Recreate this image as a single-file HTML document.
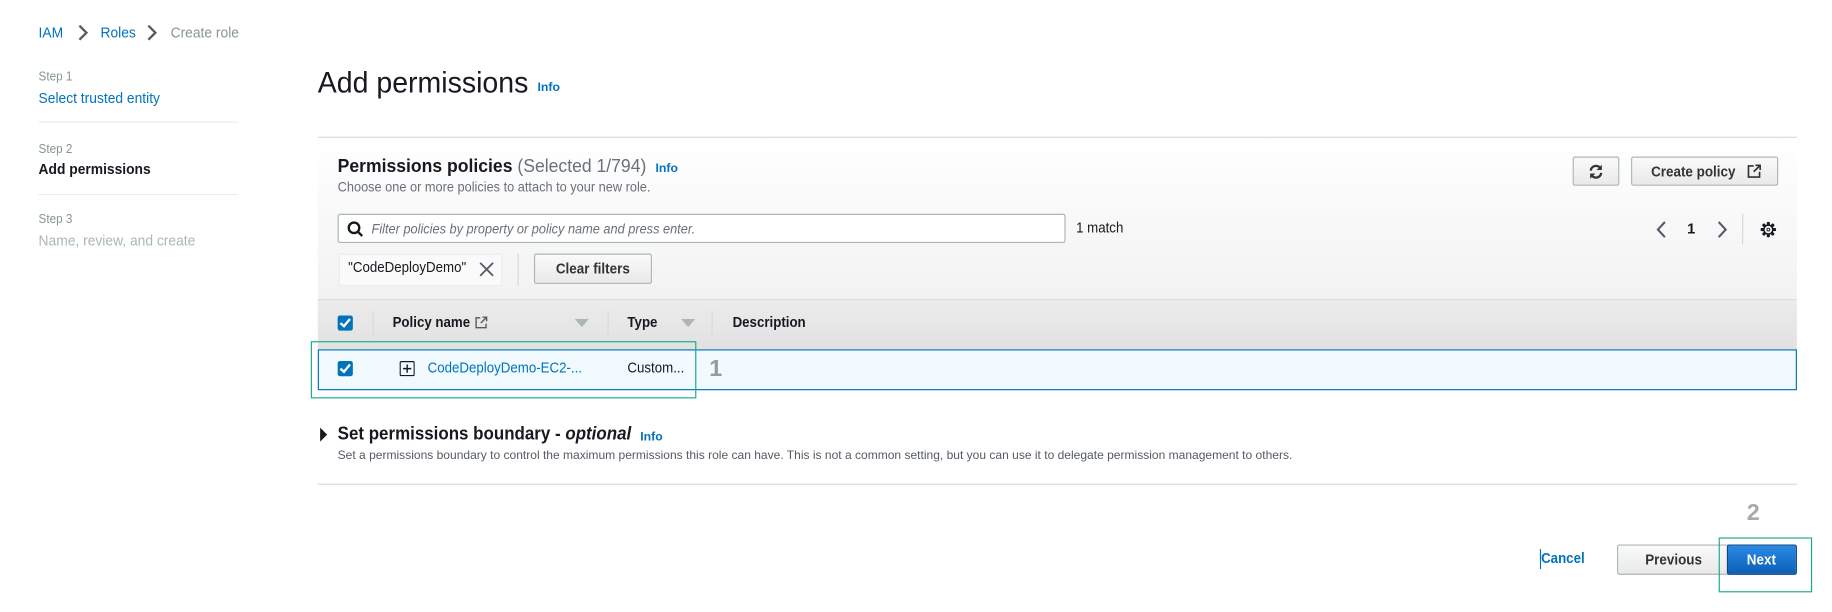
<!DOCTYPE html>
<html><head><meta charset="utf-8"><style>
html,body{margin:0;padding:0;background:#fff;overflow:hidden}
body{width:1832px;height:612px}
#s{position:absolute;left:0;top:0;width:1568px;height:524px;transform:scale(1.16837);transform-origin:0 0;font-family:"Liberation Sans",sans-serif;color:#16191f}
.a{position:absolute;white-space:nowrap}
.t{transform:scaleX(.91);transform-origin:0 0}
.blue{color:#0073bb}
.btn{position:absolute;border:1px solid #aab7b8;border-radius:2px;background:linear-gradient(#fafafa,#e9e9e9);font-weight:bold;font-size:12.5px;color:#333;display:flex;align-items:center;justify-content:center;box-sizing:border-box}
.btn span{display:inline-block;transform:scaleX(.92)}
.cb{position:absolute;width:13px;height:13px;background:#0073bb;border-radius:2px}
.cb:after{content:"";position:absolute;left:4px;top:1px;width:3px;height:7px;border:solid #fff;border-width:0 2px 2px 0;transform:rotate(40deg)}
.tri{position:absolute;width:0;height:0;border-left:6px solid transparent;border-right:6px solid transparent;border-top:7px solid #aab7b8}
</style></head><body><div id="s">
<div class="a t blue" style="left:33px;top:20px;font-size:13px">IAM</div>
<svg class="a" style="left:66px;top:21px" width="10" height="14"><path d="M2 1l6 6-6 6" fill="none" stroke="#545b64" stroke-width="2"/></svg>
<div class="a t blue" style="left:86px;top:20px;font-size:13px">Roles</div>
<svg class="a" style="left:125px;top:21px" width="10" height="14"><path d="M2 1l6 6-6 6" fill="none" stroke="#545b64" stroke-width="2"/></svg>
<div class="a t" style="left:146px;top:20px;font-size:13px;color:#879596">Create role</div>

<div class="a t" style="left:33px;top:60px;font-size:11px;color:#879596">Step 1</div>
<div class="a t blue" style="left:33px;top:76px;font-size:13px">Select trusted entity</div>
<div class="a" style="left:33px;top:104px;width:171px;height:1px;background:#eaeded"></div>
<div class="a t" style="left:33px;top:122px;font-size:11px;color:#879596">Step 2</div>
<div class="a t" style="left:33px;top:137px;font-size:13px;font-weight:bold">Add permissions</div>
<div class="a" style="left:33px;top:166px;width:171px;height:1px;background:#eaeded"></div>
<div class="a t" style="left:33px;top:182px;font-size:11px;color:#879596">Step 3</div>
<div class="a t" style="left:33px;top:198px;font-size:13px;color:#aab7b8">Name, review, and create</div>

<div class="a t" style="left:272px;top:57px;font-size:25px;color:#16191f;transform:scaleX(.975)">Add permissions</div>
<div class="a blue" style="left:460px;top:69px;font-size:10.5px;font-weight:bold">Info</div>

<div class="a" style="left:272px;top:117px;width:1266px;height:139px;border-top:1px solid #d5dbdb;background:linear-gradient(#fff,#f2f2f2)"></div>
<div class="a t" style="left:289px;top:134px;font-size:16px;transform:scaleX(.94)"><b>Permissions policies</b> <span style="color:#687078">(Selected 1/794)</span></div>
<div class="a blue" style="left:561px;top:138px;font-size:10.5px;font-weight:bold">Info</div>
<div class="a t" style="left:289px;top:153px;font-size:12px;color:#687078">Choose one or more policies to attach to your new role.</div>
<div class="btn" style="left:1346px;top:134px;width:40px;height:25px"><svg width="14" height="14" viewBox="0 0 14 14"><path d="M2.5 6A4.5 4.5 0 0 1 11 4.5M11.5 8A4.5 4.5 0 0 1 3 9.5" fill="none" stroke="#333" stroke-width="2"/><path d="M12 1v4.5H7.5zM2 13V8.5h4.5z" fill="#333"/></svg></div>
<div class="btn" style="left:1396px;top:134px;width:126px;height:25px"><span>Create policy</span>&nbsp;&nbsp;<svg width="13" height="13" viewBox="0 0 13 13"><path d="M6 2H1.5v9.5H11V7M7.5 1.5h4v4M11.5 1.5L6 7" fill="none" stroke="#333" stroke-width="1.4"/></svg></div>

<div class="a" style="left:289px;top:183px;width:623px;height:25px;border:1px solid #aab7b8;border-radius:2px;background:#fff;box-sizing:border-box"></div>
<svg class="a" style="left:297px;top:189px" width="14" height="14"><circle cx="6" cy="6" r="4.5" fill="none" stroke="#16191f" stroke-width="2"/><path d="M9 9l4 4" stroke="#16191f" stroke-width="2"/></svg>
<div class="a t" style="left:318px;top:189px;font-size:12px;font-style:italic;color:#687078">Filter policies by property or policy name and press enter.</div>
<div class="a t" style="left:921px;top:188px;font-size:12.5px;color:#16191f">1 match</div>
<svg class="a" style="left:1417px;top:189px" width="10" height="15"><path d="M8 1L2 7.5 8 14" fill="none" stroke="#545b64" stroke-width="1.8"/></svg>
<div class="a" style="left:1444px;top:189px;font-size:12.5px;font-weight:bold">1</div>
<svg class="a" style="left:1469px;top:189px" width="10" height="15"><path d="M2 1l6 6.5L2 14" fill="none" stroke="#545b64" stroke-width="1.8"/></svg>
<div class="a" style="left:1491px;top:183px;width:1px;height:26px;background:#d5dbdb"></div>
<svg class="a" style="left:1506px;top:189px" width="15" height="15" viewBox="0 0 17 17"><g fill="#16191f"><rect x="7" y="1" width="3" height="15" rx="1"/><rect x="1" y="7" width="15" height="3" rx="1"/><rect x="7" y="1" width="3" height="15" rx="1" transform="rotate(45 8.5 8.5)"/><rect x="7" y="1" width="3" height="15" rx="1" transform="rotate(-45 8.5 8.5)"/></g><circle cx="8.5" cy="8.5" r="5" fill="#16191f"/><circle cx="8.5" cy="8.5" r="3.6" fill="#f4f4f4"/><circle cx="8.5" cy="8.5" r="1.8" fill="#16191f"/><circle cx="8.5" cy="8.5" r="0.9" fill="#f4f4f4"/></svg>

<div class="a" style="left:290px;top:217px;width:140px;height:28px;border:1px solid #eaeded;border-radius:2px;background:#fafafa;box-sizing:border-box"></div>
<div class="a t" style="left:298px;top:222px;font-size:12.5px">"CodeDeployDemo"</div>
<svg class="a" style="left:410px;top:224px" width="13" height="13"><path d="M1 1l11 11M12 1L1 12" stroke="#545b64" stroke-width="1.6"/></svg>
<div class="a" style="left:443px;top:217px;width:1px;height:28px;background:#d5dbdb"></div>
<div class="btn" style="left:457px;top:217px;width:101px;height:26px"><span>Clear filters</span></div>

<div class="a" style="left:272px;top:256px;width:1266px;height:43px;border-top:1px solid #d5dbdb;background:linear-gradient(#ececec,#e1e1e1);box-sizing:border-box"></div>
<div class="cb" style="left:289px;top:270px"></div>
<div class="a" style="left:319px;top:266px;width:1px;height:22px;background:#d5dbdb"></div>
<div class="a t" style="left:336px;top:269px;font-size:12.5px;font-weight:bold">Policy name</div>
<svg class="a" style="left:406px;top:270px" width="12" height="12"><path d="M5 2H1.5v8.5H10V7M7 1.5h3.5V5M10.5 1.5L5.5 6.5" fill="none" stroke="#545b64" stroke-width="1.2"/></svg>
<div class="tri" style="left:492px;top:273px"></div>
<div class="a" style="left:520px;top:266px;width:1px;height:22px;background:#d5dbdb"></div>
<div class="a t" style="left:537px;top:269px;font-size:12.5px;font-weight:bold">Type</div>
<div class="tri" style="left:583px;top:273px"></div>
<div class="a" style="left:609px;top:266px;width:1px;height:22px;background:#d5dbdb"></div>
<div class="a t" style="left:627px;top:269px;font-size:12.5px;font-weight:bold">Description</div>

<div class="a" style="left:272px;top:299px;width:1266px;height:35px;border:1px solid #0073bb;background:#f1faff;box-sizing:border-box"></div>
<div class="cb" style="left:289px;top:309px"></div>
<svg class="a" style="left:342px;top:309px" width="13" height="13"><rect x="0.5" y="0.5" width="12" height="12" rx="1" fill="none" stroke="#16191f"/><path d="M6.5 3v7M3 6.5h7" stroke="#16191f" stroke-width="1.2"/></svg>
<div class="a t blue" style="left:366px;top:308px;font-size:12.5px">CodeDeployDemo-EC2-...</div>
<div class="a t" style="left:537px;top:308px;font-size:12.5px">Custom...</div>
<div class="a" style="left:266px;top:292px;width:330px;height:49px;border:1px solid #1aab8b;box-sizing:border-box"></div>
<div class="a" style="left:607px;top:305px;font-size:20px;font-weight:bold;color:#999">1</div>

<svg class="a" style="left:273px;top:365px" width="8" height="14"><path d="M1 1l6 6-6 6z" fill="#16191f"/></svg>
<div class="a t" style="left:289px;top:363px;font-size:15.5px;font-weight:bold;transform:scaleX(.935)">Set permissions boundary - <i>optional</i></div>
<div class="a blue" style="left:548px;top:368px;font-size:10.5px;font-weight:bold">Info</div>
<div class="a" style="left:289px;top:385px;font-size:10.3px;color:#545b64">Set a permissions boundary to control the maximum permissions this role can have. This is not a common setting, but you can use it to delegate permission management to others.</div>
<div class="a" style="left:272px;top:414px;width:1266px;height:1px;background:#d5dbdb"></div>

<div class="a" style="left:1495px;top:428px;font-size:20px;font-weight:bold;color:#aaa">2</div>
<div class="a" style="left:1318px;top:470px;width:1px;height:17px;background:#0073bb"></div>
<div class="a t blue" style="left:1319px;top:471px;font-size:12.5px;font-weight:bold">Cancel</div>
<div class="btn" style="left:1384px;top:466px;width:97px;height:26px"><span>Previous</span></div>
<div class="btn" style="left:1478px;top:466px;width:60px;height:26px;background:linear-gradient(#2a8ae6,#0d5fb5);border-color:#0a4a8c;color:#fff"><span>Next</span></div>
<div class="a" style="left:1471px;top:460px;width:80px;height:47px;border:1px solid #1aab8b;box-sizing:border-box"></div>
</div></body></html>
